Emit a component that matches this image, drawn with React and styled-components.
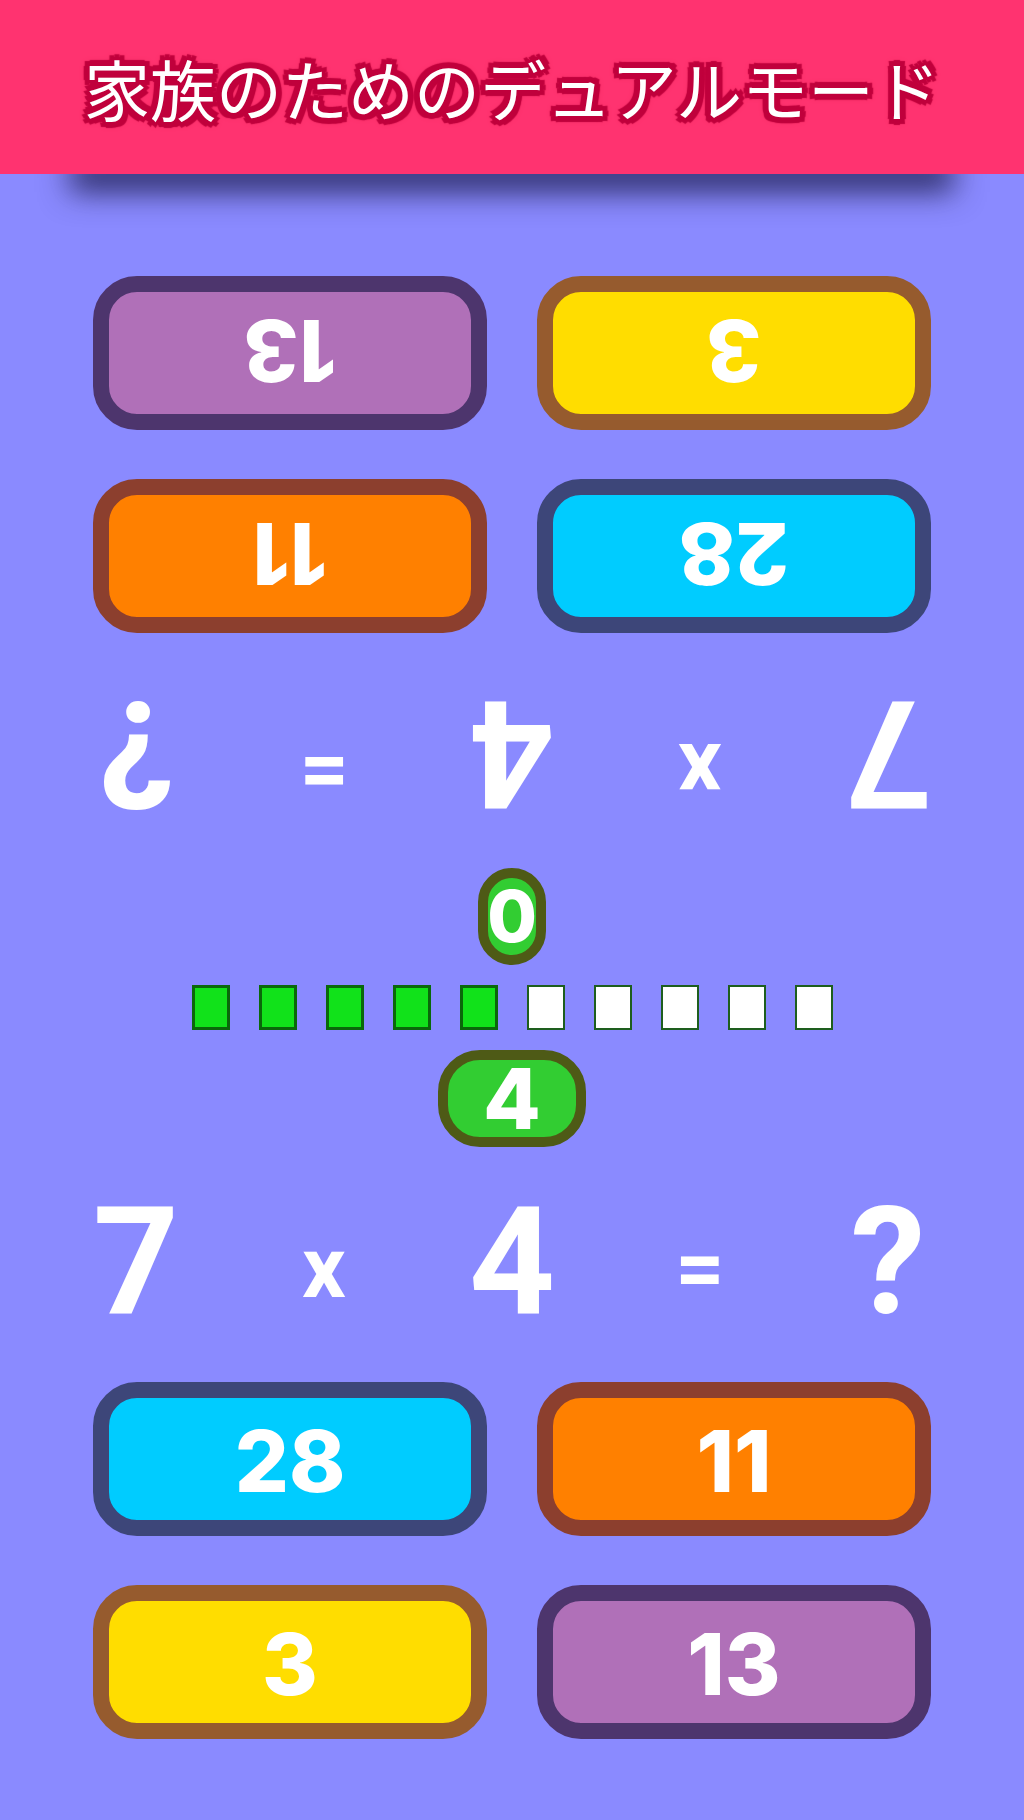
import React from 'react'
import styled, { createGlobalStyle } from 'styled-components'

const GlobalStyle = createGlobalStyle`
    html, body {
        margin: 0;
        padding: 0;
        background: #8a8aff;
    }
    body {
        font-family: Inter, Roboto, sans-serif;
    }
`

const Page = styled.div`
    width: 1024px;
    height: 1820px;
    display: flex;
    flex-direction: column;
    background: #8a8aff;
    overflow: hidden;
`

const Header = styled.header`
    position: relative;
    z-index: 1;
    height: 174px;
    flex-shrink: 0;
    display: flex;
    align-items: center;
    justify-content: center;
    background: #ff3370;
    box-shadow: 0 88px 30px -70px rgba(30, 30, 80, 0.85);
`

const Title = styled.h1`
    margin: 0;
    font-family: "Noto Sans CJK JP", sans-serif;
    font-weight: 400;
    font-size: 66px;
    line-height: 1;
    color: #fff;
    text-shadow:
        3px 0 0 #c0003c, -3px 0 0 #c0003c, 0 3px 0 #c0003c, 0 -3px 0 #c0003c,
        3px 3px 0 #c0003c, -3px -3px 0 #c0003c, 3px -3px 0 #c0003c, -3px 3px 0 #c0003c,
        6px 0 1px #c0003c, -6px 0 1px #c0003c, 0 6px 1px #c0003c, 0 -6px 1px #c0003c,
        5px 5px 1px #c0003c, -5px -5px 1px #c0003c, 5px -5px 1px #c0003c, -5px 5px 1px #c0003c,
        0 0 8px #a00030;
`

const Main = styled.main`
    display: flex;
    flex-direction: column;
    align-items: center;
    padding: 101px 0 81px;
`

const Panel = styled.section`
    width: 1024px;
    height: ${p => p.$h}px;
    display: flex;
    flex-direction: column;
    align-items: center;
    padding-top: 20px;
    box-sizing: border-box;
    transform: ${p => (p.$flipped ? 'rotate(180deg)' : 'none')};
`

const Pill = styled.div`
    height: 97px;
    width: ${p => p.$w}px;
    box-sizing: border-box;
    border: 10px solid #4e5a16;
    border-radius: ${p => p.$r}px;
    background: #32cd32;
    display: flex;
    align-items: center;
    justify-content: center;
    color: #fff;
    font-family: Inter, sans-serif;
    font-weight: 800;
    font-size: ${p => p.$fs}px;
    line-height: 1;
`

const Equation = styled.div`
    margin-top: 40px;
    height: 150px;
    display: grid;
    grid-template-columns: repeat(5, 188px);
    align-items: center;
    justify-items: center;
    color: #fff;
    font-family: Roboto, sans-serif;
    font-weight: 700;
`

const Term = styled.span`
    font-size: ${p => (p.$op ? 86 : 150)}px;
    line-height: 1;
    transform: translateY(${p => (p.$op ? p.$shift : 0)}px);
`

const Grid = styled.div`
    margin-top: 45px;
    display: grid;
    grid-template-columns: repeat(2, 394px);
    grid-auto-rows: 154px;
    column-gap: 50px;
    row-gap: 49px;
`

const Answer = styled.button`
    box-sizing: border-box;
    border: 16px solid ${p => p.$edge};
    border-radius: 44px;
    background: ${p => p.$fill};
    color: #fff;
    font-family: Inter, sans-serif;
    font-weight: 800;
    font-size: 85px;
    line-height: 1;
    display: flex;
    align-items: center;
    justify-content: center;
    padding: 4px 0 0;
    cursor: pointer;
`

const Progress = styled.div`
    height: 45px;
    display: flex;
    gap: 29px;
`

const Step = styled.div`
    width: 38px;
    height: 45px;
    box-sizing: border-box;
    border: ${p => (p.$on ? '3px solid #0a680a' : '2px solid #1e5e1e')};
    background: ${p => (p.$on ? '#11e21a' : '#fff')};
`

const colors = {
    cyan: { fill: '#00ccff', edge: '#3d4679' },
    orange: { fill: '#ff8000', edge: '#8c3f2e' },
    yellow: { fill: '#ffdd00', edge: '#965b2e' },
    purple: { fill: '#b070b8', edge: '#4d356d' },
}

const answers = [
    { value: 28, color: 'cyan' },
    { value: 11, color: 'orange' },
    { value: 3, color: 'yellow' },
    { value: 13, color: 'purple' },
]

const terms = [
    { t: '7' },
    { t: 'x', op: true },
    { t: '4' },
    { t: '=', op: true },
    { t: '?' },
]

function PlayerPanel({ flipped, score, pill, height, opShift }) {
    return (
        <Panel $flipped={flipped} $h={height}>
            <Pill $w={pill.w} $r={pill.r} $fs={pill.fs}>{score}</Pill>
            <Equation>
                {terms.map((term, i) => (
                    <Term key={i} $op={term.op} $shift={opShift}>{term.t}</Term>
                ))}
            </Equation>
            <Grid>
                {answers.map(a => (
                    <Answer key={a.value} $fill={colors[a.color].fill} $edge={colors[a.color].edge}>
                        {a.value}
                    </Answer>
                ))}
            </Grid>
        </Panel>
    )
}

export default function App() {
    const filled = 5
    return (
        <Page>
            <GlobalStyle />
            <Header>
                <Title>家族のためのデュアルモード</Title>
            </Header>
            <Main>
                <PlayerPanel flipped score={0} height={710} opShift={-20} pill={{ w: 68, r: 34, fs: 72 }} />
                <Progress>
                    {Array.from({ length: 10 }).map((_, i) => (
                        <Step key={i} $on={i < filled} />
                    ))}
                </Progress>
                <PlayerPanel score={4} height={709} opShift={6} pill={{ w: 148, r: 42, fs: 84 }} />
            </Main>
        </Page>
    )
}
